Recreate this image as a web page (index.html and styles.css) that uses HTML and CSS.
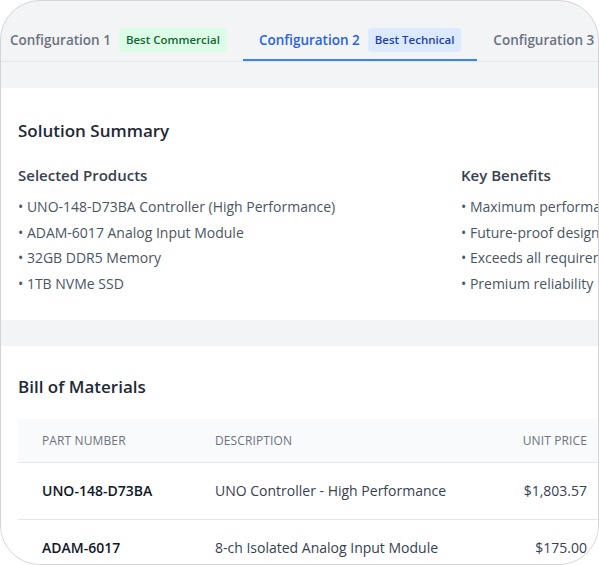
FILE: index.html
```html
<!DOCTYPE html>
<html>
<head>
<meta charset="utf-8">
<link rel="stylesheet" href="styles.css">
</head>
<body>
<div class="frame">
  <div class="app">
    <div class="tabs">
      <div class="tab">
        <span class="tab-label">Configuration 1</span>
        <span class="badge badge-green">Best Commercial</span>
      </div>
      <div class="tab active">
        <span class="tab-label">Configuration 2</span>
        <span class="badge badge-blue">Best Technical</span>
      </div>
      <div class="tab">
        <span class="tab-label">Configuration 3</span>
      </div>
    </div>
    <div class="content">
      <section class="card summary-card">
        <h2 class="card-title">Solution Summary</h2>
        <div class="summary-grid">
          <div class="summary-col">
            <h3 class="col-title">Selected Products</h3>
            <ul class="bullets">
              <li>• UNO-148-D73BA Controller (High Performance)</li>
              <li>• ADAM-6017 Analog Input Module</li>
              <li>• 32GB DDR5 Memory</li>
              <li>• 1TB NVMe SSD</li>
            </ul>
          </div>
          <div class="summary-col">
            <h3 class="col-title">Key Benefits</h3>
            <ul class="bullets">
              <li>• Maximum performance</li>
              <li>• Future-proof design</li>
              <li>• Exceeds all requirements</li>
              <li>• Premium reliability</li>
            </ul>
          </div>
        </div>
      </section>
      <section class="card bom-card">
        <h2 class="card-title bom-title">Bill of Materials</h2>
        <table class="bom">
          <colgroup>
            <col class="c-part">
            <col class="c-desc">
            <col class="c-price">
            <col class="c-qty">
            <col class="c-total">
          </colgroup>
          <thead>
            <tr>
              <th>Part Number</th>
              <th>Description</th>
              <th class="num">Unit Price</th>
              <th class="num">Qty</th>
              <th class="num">Total</th>
            </tr>
          </thead>
          <tbody>
            <tr>
              <td class="part">UNO-148-D73BA</td>
              <td>UNO Controller - High Performance</td>
              <td class="num">$1,803.57</td>
              <td class="num">1</td>
              <td class="num">$1,803.57</td>
            </tr>
            <tr>
              <td class="part">ADAM-6017</td>
              <td>8-ch Isolated Analog Input Module</td>
              <td class="num">$175.00</td>
              <td class="num">1</td>
              <td class="num">$175.00</td>
            </tr>
          </tbody>
        </table>
      </section>
    </div>
  </div>
</div>
</body>
</html>
```
FILE: styles.css
```css
* { box-sizing: border-box; }
html, body { margin: 0; padding: 0; background: #ffffff; }
body { font-family: "Open Sans", "Noto Sans", sans-serif; color: #374151; }

.frame {
  width: 599px;
  height: 565px;
  border: 1px solid #d4d4d8;
  border-radius: 40px;
  overflow: hidden;
  background: #f3f4f6;
}

.app {
  width: 910px;
  margin-left: -7px;
  margin-top: -1px;
}

.tabs {
  display: flex;
  align-items: flex-end;
  height: 62px;
  padding-top: 21px;
  border-bottom: 1px solid #e5e7eb;
}

.tab {
  display: flex;
  align-items: center;
  gap: 8px;
  padding: 0 16px;
  height: 41px;
  border-bottom: 2px solid transparent;
  font-size: 13.5px;
  font-weight: 600;
  color: #6b7280;
  white-space: nowrap;
}
.tab.active { color: #2563eb; border-bottom-color: #3b82f6; }

.badge {
  display: inline-flex;
  align-items: center;
  height: 24px;
  padding: 0 7px;
  border-radius: 4px;
  font-size: 11.5px;
  font-weight: 600;
}
.badge-green { background: #dcfce7; color: #166534; }
.badge-blue { background: #dbeafe; color: #1e40af; }

.content {
  padding-top: 26px;
  display: flex;
  flex-direction: column;
  gap: 26px;
}

.card {
  background: #ffffff;
  padding: 29px 24px 24px;
}
.bom-card { padding-top: 27px; }

.card-title {
  margin: 0 0 18px;
  font-size: 17px;
  line-height: 28px;
  font-weight: 600;
  color: #1f2937;
}

.summary-grid {
  display: grid;
  grid-template-columns: 1fr 1fr;
  gap: 24px;
}

.col-title {
  margin: 0 0 7px;
  font-size: 15px;
  line-height: 24px;
  font-weight: 600;
  color: #374151;
}

.bullets {
  list-style: none;
  margin: 0;
  padding: 0;
  font-size: 14px;
  line-height: 25.6px;
  color: #4b5563;
  white-space: nowrap;
}

.bom {
  width: 100%;
  table-layout: fixed;
  border-collapse: collapse;
}
.c-part { width: 173px; }
.c-desc { width: 279px; }
.c-price { width: 141px; }
.c-qty { width: 120px; }
.c-total { width: 149px; }

.bom th {
  background: #f9fafb;
  height: 43px;
  padding: 0 24px;
  text-align: left;
  font-size: 12px;
  font-weight: 500;
  text-transform: uppercase;
  letter-spacing: 0.01em;
  color: #6b7280;
  border-bottom: 1px solid #e5e7eb;
}
.bom td {
  height: 57px;
  padding: 0 24px;
  font-size: 14px;
  color: #374151;
  border-bottom: 1px solid #e5e7eb;
  white-space: nowrap;
}
.bom .num { text-align: right; }
.bom td.part { font-weight: 600; color: #111827; }
```
